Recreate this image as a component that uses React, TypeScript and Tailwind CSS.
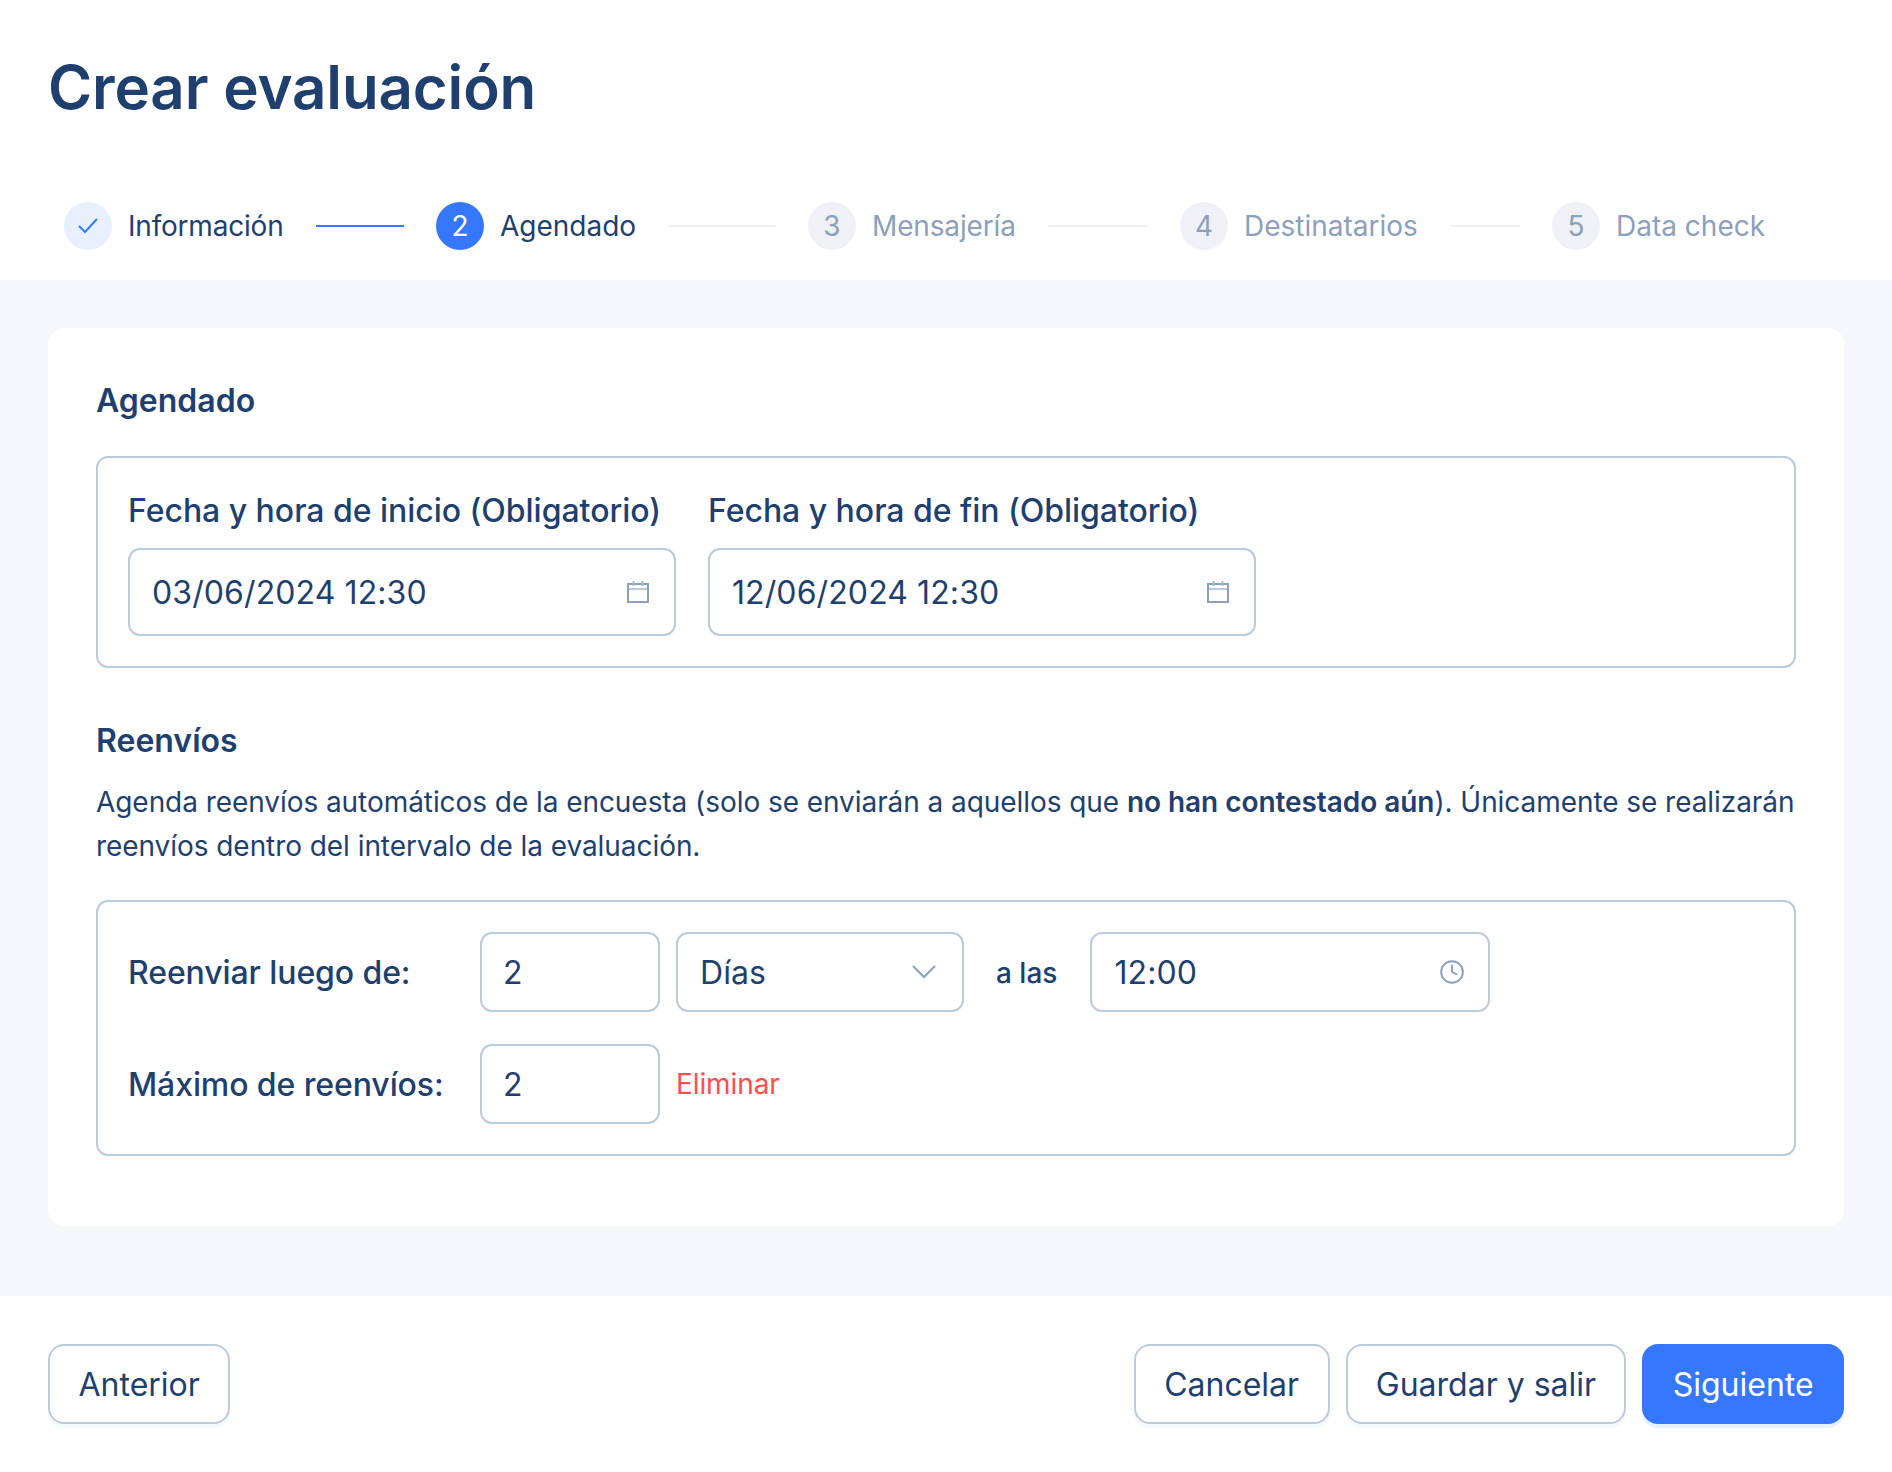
import React from "react";
import { Clock } from "lucide-react";

const steps = [
  { n: "1", label: "Información", state: "done" },
  { n: "2", label: "Agendado", state: "active" },
  { n: "3", label: "Mensajería", state: "todo" },
  { n: "4", label: "Destinatarios", state: "todo" },
  { n: "5", label: "Data check", state: "todo" },
];

function CalendarIcon() {
  return (
    <svg width="24" height="24" viewBox="0 0 24 24" fill="none" className="shrink-0">
      <rect x="2" y="4" width="20" height="18" stroke="#8c9fbb" strokeWidth="2" />
      <path d="M3 9h18" stroke="#bdcadb" strokeWidth="2" />
      <path d="M7.5 1v5M16.5 1v5" stroke="#a9b8cd" strokeWidth="2" />
    </svg>
  );
}

function ChevronIcon() {
  return (
    <svg width="26" height="16" viewBox="0 0 26 16" fill="none" stroke="#8c9fbb" strokeWidth="2" className="shrink-0">
      <path d="M2 2l11 11L24 2" />
    </svg>
  );
}

function CheckIcon() {
  return (
    <svg width="20" height="16" viewBox="0 0 20 16" fill="none" stroke="#3578ff" strokeWidth="2">
      <path d="M1 8l6 6L19 1" />
    </svg>
  );
}

function Step({ step, last }: { step: (typeof steps)[number]; last: boolean }) {
  const { n, label, state } = step;
  return (
    <div className={`flex items-center ${last ? "" : "w-[372px]"}`}>
      {state === "done" && (
        <div className="flex h-12 w-12 shrink-0 items-center justify-center rounded-full bg-[#e8f0fe]">
          <CheckIcon />
        </div>
      )}
      {state === "active" && (
        <div className="flex h-12 w-12 shrink-0 items-center justify-center rounded-full bg-[#3578ff] text-[28px] text-white">2</div>
      )}
      {state === "todo" && (
        <div className="flex h-12 w-12 shrink-0 items-center justify-center rounded-full bg-[#eff1f6] text-[28px] text-[#8c9fbb]">{n}</div>
      )}
      <span
        className={`ml-4 whitespace-nowrap text-[28px] leading-[40px] ${state === "todo" ? "text-[#8c9fbb]" : "text-[#1f3f6e]"} ${state === "done" ? "tracking-[-0.2px]" : ""} ${label === "Mensajería" ? "tracking-[-0.15px]" : ""}`}
      >
        {label}
      </span>
      {!last && <div className={`mx-8 h-0.5 flex-1 ${state === "done" ? "bg-[#3578ff]" : "bg-[#eff1f6]"}`} />}
    </div>
  );
}

function Field({ value, cls, icon }: { value: string; cls: string; icon?: React.ReactNode }) {
  return (
    <div className={`flex items-center justify-between rounded-xl border-2 border-[#bdcadb] bg-white text-[32px] tracking-[0.1px] text-[#1f3f6e] ${cls}`}>
      <span className="pt-[2px]">{value}</span>
      {icon}
    </div>
  );
}

export default function App() {
  return (
    <div className="flex h-[1472px] w-full flex-col bg-white font-['Inter',sans-serif] text-[#1f3f6e]">
      <header className="h-[280px] px-12 pt-[47px]">
        <h1 className="text-[60px] font-semibold leading-[80px] tracking-[-0.15px]">Crear evaluación</h1>
        <div className="mt-[75px] flex h-12 items-center px-4">
          {steps.map((s, i) => (
            <Step key={s.n} step={s} last={i === steps.length - 1} />
          ))}
        </div>
      </header>
      <main className="flex-1 bg-[#f5f7fb] p-12 pb-0">
        <section className="h-[898px] rounded-2xl bg-white px-12 pt-[49px]">
          <h2 className="text-[32px] font-semibold leading-12">Agendado</h2>
          <div className="mt-[31px] flex gap-8 rounded-xl border-2 border-[#bdcadb] px-[30px] pb-[30px] pt-[29px]">
            <div>
              <div className="mb-[13px] text-[32px] font-medium leading-12 tracking-[-0.03px]">Fecha y hora de inicio (Obligatorio)</div>
              <Field value="03/06/2024 12:30" cls="h-[88px] w-[548px] pl-[22px] pr-[24px]" icon={<CalendarIcon />} />
            </div>
            <div>
              <div className="mb-[13px] text-[32px] font-medium leading-12 tracking-[-0.03px]">Fecha y hora de fin (Obligatorio)</div>
              <Field value="12/06/2024 12:30" cls="h-[88px] w-[548px] pl-[22px] pr-[24px]" icon={<CalendarIcon />} />
            </div>
          </div>
          <h2 className="mt-[49px] text-[32px] font-semibold leading-12">Reenvíos</h2>
          <p className="mt-[15px] text-[28px] leading-[44px] tracking-[-0.06px]">
            Agenda reenvíos automáticos de la encuesta (solo se enviarán a aquellos que <strong className="font-semibold">no han contestado aún</strong>). Únicamente se realizarán reenvíos dentro del intervalo de la evaluación.
          </p>
          <div className="mt-[32px] flex flex-col gap-8 rounded-xl border-2 border-[#bdcadb] p-[30px]">
            <div className="flex items-center">
              <div className="w-[352px] pt-[2px] text-[32px] font-medium tracking-[-0.1px]">Reenviar luego de:</div>
              <Field value="2" cls="h-20 w-[180px] pl-[21px]" />
              <div className="ml-4 w-[288px]">
                <Field value="Días" cls="h-20 w-full pl-[22px] pr-[25px]" icon={<ChevronIcon />} />
              </div>
              <span className="ml-8 mr-[33px] pt-[1px] text-[28px] font-medium">a las</span>
              <Field value="12:00" cls="h-20 w-[400px] pl-[22px] pr-[23px]" icon={<Clock size={26} strokeWidth={1.8} color="#8c9fbb" />} />
            </div>
            <div className="flex items-center">
              <div className="w-[352px] pt-[2px] text-[32px] font-medium tracking-[-0.1px]">Máximo de reenvíos:</div>
              <Field value="2" cls="h-20 w-[180px] pl-[21px]" />
              <span className="ml-4 text-[28px] tracking-[-0.1px] text-[#ff4d4f]">Eliminar</span>
            </div>
          </div>
        </section>
      </main>
      <footer className="flex items-center justify-between bg-white p-12">
        <button className="h-20 rounded-2xl border-2 border-[#bdcadb] bg-white px-[28.5px] pt-[2px] text-[32px] text-[#1f3f6e] shadow-[0_4px_0_#f5f8fd]">Anterior</button>
        <div className="flex gap-4">
          <button className="h-20 rounded-2xl border-2 border-[#bdcadb] bg-white px-[28.5px] pt-[2px] text-[32px] text-[#1f3f6e] shadow-[0_4px_0_#f5f8fd]">Cancelar</button>
          <button className="h-20 rounded-2xl border-2 border-[#bdcadb] bg-white px-[28.2px] pt-[2px] text-[32px] text-[#1f3f6e] shadow-[0_4px_0_#f5f8fd]">Guardar y salir</button>
          <button className="h-20 rounded-2xl bg-[#3578ff] px-[30.4px] pt-[2px] text-[32px] text-white shadow-[0_4px_0_#e6f1ff]">Siguiente</button>
        </div>
      </footer>
    </div>
  );
}
